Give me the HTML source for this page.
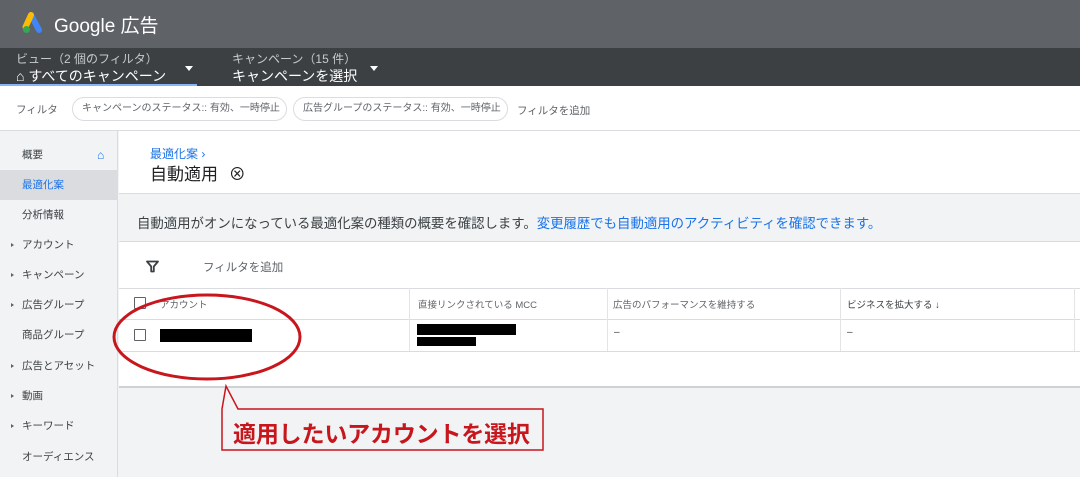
<!DOCTYPE html>
<html><head><meta charset="utf-8"><style>
*{margin:0;padding:0;box-sizing:border-box}
body{width:1080px;height:477px;overflow:hidden;position:relative;background:#f1f3f4;font-family:"Liberation Sans","Noto Sans CJK JP",sans-serif;color:#3c4043}
.abs{position:absolute}
.top{left:0;top:0;width:1080px;height:48px;background:#5f6368}
.bar2{left:0;top:48px;width:1080px;height:38px;background:#3c4043}
.fbar{left:0;top:86px;width:1080px;height:45px;background:#fff;border-bottom:1px solid #dadce0}
.chip{top:97px;height:24px;border:1px solid #dadce0;border-radius:12px;font-size:10px;line-height:22px;padding:0 9px;color:#5f6368;white-space:nowrap}
.side{left:0;top:131px;width:118px;height:346px;background:#f1f3f4;border-right:1px solid #dadce0}
.si{position:absolute;left:0;width:117px;height:30px;font-size:10.5px;line-height:30px;color:#3c4043}
.si span{position:absolute;left:22px}
.si i{position:absolute;left:11px;top:13px;border-left:3px solid #5f6368;border-top:2.5px solid transparent;border-bottom:2.5px solid transparent}
.th{font-size:9.5px;color:#5f6368;top:297px}
</style></head><body>
<div class="abs top"></div>
<svg class="abs" style="left:22px;top:12px" width="24" height="22" viewBox="0 0 24 22">
<path d="M9 3 L17 18" stroke="#4285f4" stroke-width="6" stroke-linecap="round"/>
<path d="M9 3 L3.5 15" stroke="#fbbc04" stroke-width="6" stroke-linecap="round"/>
<circle cx="4.5" cy="17.5" r="3.5" fill="#34a853"/></svg>
<div class="abs" style="left:54px;top:11px;font-size:19px;color:#fff;letter-spacing:0">Google 広告</div>
<div class="abs bar2"></div>
<div class="abs" style="left:16px;top:50px;font-size:12px;color:#c8cacc">ビュー（2 個のフィルタ）</div>
<div class="abs" style="left:16px;top:66px;font-size:14px;color:#fff">⌂ すべてのキャンペーン</div>
<div class="abs" style="left:185px;top:66px;border-top:5px solid #fff;border-left:4.5px solid transparent;border-right:4.5px solid transparent"></div>
<div class="abs" style="left:0;top:84px;width:197px;height:3px;background:#8ab4f8"></div>
<div class="abs" style="left:232px;top:50px;font-size:12px;color:#c8cacc">キャンペーン（15 件）</div>
<div class="abs" style="left:232px;top:66px;font-size:14px;color:#fff">キャンペーンを選択</div>
<div class="abs" style="left:370px;top:66px;border-top:5px solid #fff;border-left:4.5px solid transparent;border-right:4.5px solid transparent"></div>
<div class="abs fbar"></div>
<div class="abs" style="left:16px;top:102px;font-size:10.5px;color:#5f6368">フィルタ</div>
<div class="abs chip" style="left:72px;width:215px">キャンペーンのステータス:: 有効、一時停止</div>
<div class="abs chip" style="left:293px;width:215px">広告グループのステータス:: 有効、一時停止</div>
<div class="abs" style="left:517px;top:103px;font-size:10.5px;color:#5f6368">フィルタを追加</div>

<div class="abs side">
<div class="si" style="top:9px"><span>概要</span><span style="left:97px;color:#1a73e8;font-size:12px">⌂</span></div>
<div class="si" style="top:39px;background:#dadce0"><span style="color:#1a73e8">最適化案</span></div>
<div class="si" style="top:69px"><span>分析情報</span></div>
<div class="si" style="top:99px"><i></i><span>アカウント</span></div>
<div class="si" style="top:129px"><i></i><span>キャンペーン</span></div>
<div class="si" style="top:159px"><i></i><span>広告グループ</span></div>
<div class="si" style="top:189px"><span>商品グループ</span></div>
<div class="si" style="top:220px"><i></i><span>広告とアセット</span></div>
<div class="si" style="top:250px"><i></i><span>動画</span></div>
<div class="si" style="top:280px"><i></i><span>キーワード</span></div>
<div class="si" style="top:311px"><span>オーディエンス</span></div>
</div>

<div class="abs" style="left:119px;top:131px;width:961px;height:63px;background:#fff;border-bottom:1px solid #dadce0"></div>
<div class="abs" style="left:150px;top:145px;font-size:12px;color:#1a73e8">最適化案 ›</div>
<div class="abs" style="left:150px;top:160px;font-size:17px;color:#202124">自動適用 <span style="font-size:17px;margin-left:6px">⊗</span></div>
<div class="abs" style="left:137px;top:212px;font-size:13.4px;color:#3c4043;white-space:nowrap">自動適用がオンになっている最適化案の種類の概要を確認します。<span style="color:#1a73e8">変更履歴でも自動適用のアクティビティを確認できます。</span></div>

<div class="abs" style="left:119px;top:241px;width:961px;height:147px;background:#fff;border-top:1px solid #dadce0;border-bottom:2px solid #cfd1d4"></div>
<svg class="abs" style="left:146px;top:260px" width="13" height="13" viewBox="0 0 13 13"><path d="M1 1.5H12L7.8 6.5V11.5H5.2V6.5Z" fill="none" stroke="#3c4043" stroke-width="1.8" stroke-linejoin="round"/></svg>
<div class="abs" style="left:203px;top:259px;font-size:11.5px;color:#5f6368">フィルタを追加</div>
<div class="abs" style="left:119px;top:288px;width:961px;height:1px;background:#dadce0"></div>
<div class="abs" style="left:119px;top:319px;width:961px;height:1px;background:#dadce0"></div>
<div class="abs" style="left:119px;top:351px;width:961px;height:1px;background:#dadce0"></div>
<div class="abs" style="left:409px;top:288px;width:1px;height:63px;background:#e3e4e6"></div>
<div class="abs" style="left:607px;top:288px;width:1px;height:63px;background:#e3e4e6"></div>
<div class="abs" style="left:840px;top:288px;width:1px;height:63px;background:#e3e4e6"></div>
<div class="abs" style="left:1074px;top:288px;width:1px;height:63px;background:#e3e4e6"></div>
<div class="abs" style="left:134px;top:297px;width:12px;height:12px;border:1.5px solid #5f6368;border-radius:1px"></div>
<div class="abs" style="left:134px;top:329px;width:12px;height:12px;border:1.5px solid #5f6368;border-radius:1px"></div>
<div class="abs th" style="left:160px">アカウント</div>
<div class="abs th" style="left:418px">直接リンクされている MCC</div>
<div class="abs th" style="left:613px">広告のパフォーマンスを維持する</div>
<div class="abs th" style="left:847px;color:#3c4043">ビジネスを拡大する ↓</div>
<div class="abs" style="left:160px;top:329px;width:92px;height:13px;background:#000"></div>
<div class="abs" style="left:417px;top:324px;width:99px;height:11px;background:#000"></div>
<div class="abs" style="left:417px;top:337px;width:59px;height:9px;background:#000"></div>
<div class="abs" style="left:614px;top:327px;font-size:10px">–</div>
<div class="abs" style="left:847px;top:327px;font-size:10px">–</div>

<svg class="abs" style="left:0;top:0" width="1080" height="477">
<ellipse cx="207" cy="337" rx="93" ry="42" fill="none" stroke="#c8161d" stroke-width="3"/>
<path d="M238 409 L226 386 L222 409 L222 450 L543 450 L543 409 Z" fill="#f1f3f4" stroke="#c8161d" stroke-width="1.5" stroke-linejoin="miter"/>
<text x="233" y="442" font-size="23" font-weight="bold" fill="#c8161d" textLength="297" lengthAdjust="spacing" font-family="Liberation Sans, Noto Sans CJK JP, sans-serif">適用したいアカウントを選択</text>
</svg>
</body></html>
